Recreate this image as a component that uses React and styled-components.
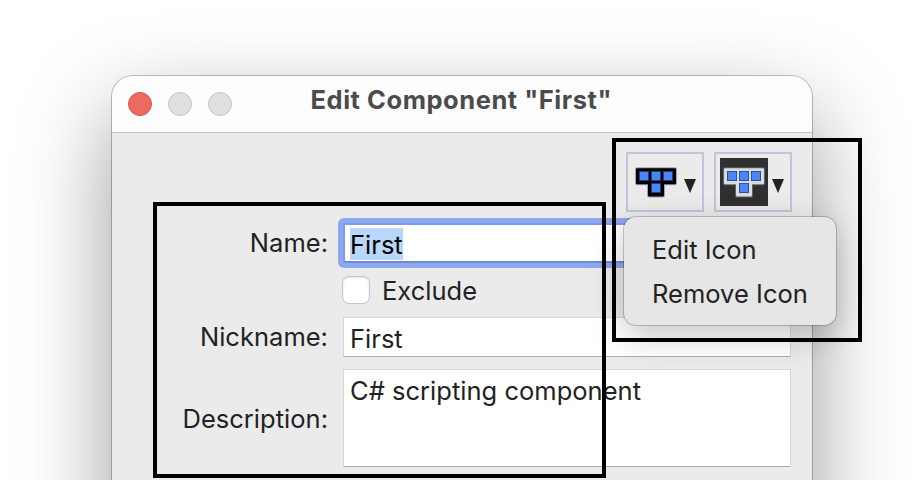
import React from "react";
import styled, { createGlobalStyle } from "styled-components";

const GlobalStyle = createGlobalStyle`
  *, *::before, *::after { box-sizing: border-box; }
  body {
    margin: 0;
    background: #fff;
    color: #222;
    font-family: Inter, "Liberation Sans", sans-serif;
    font-size: 25.5px;
    letter-spacing: 0.02px;
  }
`;

const Stage = styled.main`
  position: relative;
  width: 924px;
  height: 480px;
  padding: 76px 0 0 112px;
  overflow: hidden;
  background: #fff;
`;

const Window = styled.section`
  width: 700px;
  height: 760px;
  border-radius: 21px;
  background: #ebebeb;
  box-shadow: 0 0 0 1px rgba(0, 0, 0, 0.24), 0 36px 92px rgba(0, 0, 0, 0.4);
`;

const TitleBar = styled.header`
  display: grid;
  grid-template-columns: 196px 1fr;
  height: 57px;
  border-bottom: 1px solid #c4c4c4;
  border-radius: 21px 21px 0 0;
  background: #fdfdfd;
`;

const Lights = styled.div`
  display: flex;
  gap: 16px;
  padding: 16px 0 0 16px;
`;

const Light = styled.span`
  width: 24px;
  height: 24px;
  border: 1px solid ${(p) => (p.$close ? "#d3564b" : "#c3c3c3")};
  border-radius: 50%;
  background: ${(p) => (p.$close ? "#ec6a5e" : "#e0e0e0")};
`;

const Title = styled.h1`
  margin: 0;
  padding-left: 2.5px;
  color: #4b4b4b;
  font-size: 25.5px;
  font-weight: 700;
  line-height: 48px;
  letter-spacing: 0.54px;
  white-space: nowrap;
`;

const Toolbar = styled.div`
  display: flex;
  justify-content: flex-end;
  gap: 10px;
  padding: 19px 20px 0 0;
`;

const IconButton = styled.button`
  display: flex;
  align-items: center;
  gap: 4px;
  width: 78px;
  height: 60px;
  margin: 0;
  padding: 0 0 0 4px;
  border: 2px solid #c0c6da;
  background: transparent;
`;

const IconTile = styled.svg`
  flex: none;
  width: 48px;
  height: 48px;
  background: ${(p) => (p.$dark ? "#303030" : "transparent")};
`;

const Arrow = styled.svg`
  flex: none;
  width: 12px;
  height: 14px;
  margin-top: 8px;
`;

const Form = styled.div`
  display: grid;
  grid-template-columns: 216px 448px;
  grid-template-rows: 40px 54px 40px 98px;
  column-gap: 15px;
  margin-top: 11px;
`;

const Label = styled.label`
  display: flex;
  justify-content: flex-end;
  line-height: 40px;
  padding-top: ${(p) => p.$top || 0}px;
  white-space: nowrap;
`;

const Field = styled.div`
  grid-column: 2;
  height: ${(p) => p.$height || 40}px;
  margin-top: ${(p) => p.$gap || 0}px;
  padding: 2px 6px;
  border: 1px solid #d6d6d6;
  border-bottom-color: #adadad;
  background: #fff;
  line-height: 37px;
  white-space: nowrap;
`;

const FocusedField = styled(Field)`
  border: 2px solid #809aea;
  border-bottom-color: #6f8bd6;
  padding: 3px 5px;
  color: #000;
  box-shadow: 0 0 0 5px #8ca8ef;
  border-radius: 2px;
`;

const Selected = styled.span`
  display: inline-block;
  height: 32px;
  line-height: 33px;
  vertical-align: top;
  background: #b9d6fb;
`;

const CheckRow = styled.div`
  grid-column: 2;
  display: flex;
  align-items: flex-start;
  gap: 12px;
  padding-top: 13px;
  margin-left: -1px;
  line-height: 30px;
`;

const CheckBox = styled.span`
  width: 28px;
  height: 28px;
  border: 1px solid #c6c6c6;
  border-radius: 7px;
  background: #fff;
  box-shadow: inset 0 1px 2px rgba(0, 0, 0, 0.12);
`;

const Menu = styled.nav`
  position: absolute;
  left: 624px;
  top: 217px;
  width: 212px;
  height: 108px;
  padding: 11px 0 0 28px;
  border-radius: 12px;
  background: #e6e6e6;
  box-shadow: 0 0 0 1px rgba(0, 0, 0, 0.2), 0 10px 34px rgba(0, 0, 0, 0.24);
`;

const MenuItem = styled.div`
  height: 44px;
  line-height: 44px;
  white-space: nowrap;
`;

const Highlight = styled.div`
  position: absolute;
  left: ${(p) => p.$x}px;
  top: ${(p) => p.$y}px;
  width: ${(p) => p.$w}px;
  height: ${(p) => p.$h}px;
  border: 4px solid #000;
`;

const CELLS = [[7, 13], [19, 13], [31, 13], [19, 25]];
const BLOCKS_OUTLINE = "M5 11.2h38v14H31v12.3H17V25.2H5z";

function BlocksButton({ dark }) {
  const body = dark ? "#dcdcdc" : "#000";
  return (
    <IconButton>
      <IconTile $dark={dark} viewBox="0 0 48 48">
        <path
          d={BLOCKS_OUTLINE}
          fill={body}
          stroke={dark ? "#777" : "#000"}
          strokeOpacity={dark ? 0.7 : 0.3}
          strokeWidth="4"
          strokeLinejoin="round"
        />
        <path d={BLOCKS_OUTLINE} fill={body} stroke={body} strokeWidth="2" strokeLinejoin="round" />
        {CELLS.map(([x, y]) => (
          <rect
            key={x + "-" + y}
            x={x + 0.5}
            y={y + 0.5}
            width="9"
            height="9"
            fill="#4a86f7"
            stroke={dark ? "#2a50a0" : "#1d3c86"}
            strokeWidth="1"
          />
        ))}
      </IconTile>
      <Arrow viewBox="0 0 12 14">
        <path d="M0 0h12L6 14z" fill="#222" />
      </Arrow>
    </IconButton>
  );
}

export default function App() {
  return (
    <>
      <GlobalStyle />
      <Stage>
        <Window>
          <TitleBar>
            <Lights>
              <Light $close />
              <Light />
              <Light />
            </Lights>
            <Title>Edit Component "First"</Title>
          </TitleBar>
          <Toolbar>
            <BlocksButton />
            <BlocksButton dark />
          </Toolbar>
          <Form>
            <Label>Name:</Label>
            <FocusedField>
              <Selected>First</Selected>
            </FocusedField>
            <CheckRow>
              <CheckBox />
              Exclude
            </CheckRow>
            <Label>Nickname:</Label>
            <Field>First</Field>
            <Label $top={42}>Description:</Label>
            <Field $height={98} $gap={12}>C# scripting component</Field>
          </Form>
        </Window>
        <Menu>
          <MenuItem>Edit Icon</MenuItem>
          <MenuItem>Remove Icon</MenuItem>
        </Menu>
        <Highlight $x={153} $y={202} $w={453} $h={276} />
        <Highlight $x={612} $y={138} $w={250} $h={204} />
      </Stage>
    </>
  );
}
